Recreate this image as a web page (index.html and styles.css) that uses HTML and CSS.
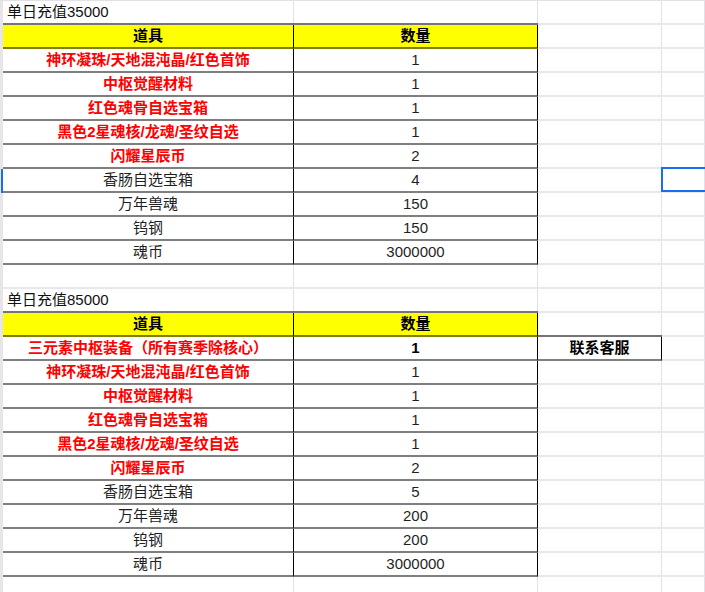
FILE: index.html
```html
<!DOCTYPE html>
<html lang="zh-CN">
<head>
<meta charset="utf-8">
<title>单日充值</title>
<link rel="stylesheet" href="styles.css">
</head>
<body>
<div class="sheet">
  <div class="row"><div class="strip"></div><div class="cell title">单日充值35000</div><div class="cell"></div><div class="cell"></div><div class="cell"></div></div>
  <div class="row"><div class="strip"></div><div class="cell t hd">道具</div><div class="cell t hd">数量</div><div class="cell"></div><div class="cell"></div></div>
  <div class="row"><div class="strip"></div><div class="cell t red">神环凝珠/天地混沌晶/红色首饰</div><div class="cell t">1</div><div class="cell"></div><div class="cell"></div></div>
  <div class="row"><div class="strip"></div><div class="cell t red">中枢觉醒材料</div><div class="cell t">1</div><div class="cell"></div><div class="cell"></div></div>
  <div class="row"><div class="strip"></div><div class="cell t red">红色魂骨自选宝箱</div><div class="cell t">1</div><div class="cell"></div><div class="cell"></div></div>
  <div class="row"><div class="strip"></div><div class="cell t red">黑色2星魂核/龙魂/圣纹自选</div><div class="cell t">1</div><div class="cell"></div><div class="cell"></div></div>
  <div class="row"><div class="strip"></div><div class="cell t red">闪耀星辰币</div><div class="cell t">2</div><div class="cell"></div><div class="cell"></div></div>
  <div class="row"><div class="strip active"></div><div class="cell t">香肠自选宝箱</div><div class="cell t">4</div><div class="cell"></div><div class="cell sel"></div></div>
  <div class="row"><div class="strip"></div><div class="cell t">万年兽魂</div><div class="cell t">150</div><div class="cell"></div><div class="cell"></div></div>
  <div class="row"><div class="strip"></div><div class="cell t">钨钢</div><div class="cell t">150</div><div class="cell"></div><div class="cell"></div></div>
  <div class="row"><div class="strip"></div><div class="cell t">魂币</div><div class="cell t">3000000</div><div class="cell"></div><div class="cell"></div></div>
  <div class="row"><div class="strip"></div><div class="cell"></div><div class="cell"></div><div class="cell"></div><div class="cell"></div></div>
  <div class="row"><div class="strip"></div><div class="cell title">单日充值85000</div><div class="cell"></div><div class="cell"></div><div class="cell"></div></div>
  <div class="row"><div class="strip"></div><div class="cell t hd">道具</div><div class="cell t hd">数量</div><div class="cell"></div><div class="cell"></div></div>
  <div class="row"><div class="strip"></div><div class="cell t red">三元素中枢装备（所有赛季除核心）</div><div class="cell t strong">1</div><div class="cell t strong boxed">联系客服</div><div class="cell"></div></div>
  <div class="row"><div class="strip"></div><div class="cell t red">神环凝珠/天地混沌晶/红色首饰</div><div class="cell t">1</div><div class="cell"></div><div class="cell"></div></div>
  <div class="row"><div class="strip"></div><div class="cell t red">中枢觉醒材料</div><div class="cell t">1</div><div class="cell"></div><div class="cell"></div></div>
  <div class="row"><div class="strip"></div><div class="cell t red">红色魂骨自选宝箱</div><div class="cell t">1</div><div class="cell"></div><div class="cell"></div></div>
  <div class="row"><div class="strip"></div><div class="cell t red">黑色2星魂核/龙魂/圣纹自选</div><div class="cell t">1</div><div class="cell"></div><div class="cell"></div></div>
  <div class="row"><div class="strip"></div><div class="cell t red">闪耀星辰币</div><div class="cell t">2</div><div class="cell"></div><div class="cell"></div></div>
  <div class="row"><div class="strip"></div><div class="cell t">香肠自选宝箱</div><div class="cell t">5</div><div class="cell"></div><div class="cell"></div></div>
  <div class="row"><div class="strip"></div><div class="cell t">万年兽魂</div><div class="cell t">200</div><div class="cell"></div><div class="cell"></div></div>
  <div class="row"><div class="strip"></div><div class="cell t">钨钢</div><div class="cell t">200</div><div class="cell"></div><div class="cell"></div></div>
  <div class="row"><div class="strip"></div><div class="cell t">魂币</div><div class="cell t">3000000</div><div class="cell"></div><div class="cell"></div></div>
  <div class="row"><div class="strip"></div><div class="cell"></div><div class="cell"></div><div class="cell"></div><div class="cell"></div></div>
</div>
</body>
</html>
```

FILE: styles.css
```css
html, body {
  margin: 0;
  padding: 0;
  background: #ffffff;
}

body {
  font-family: "Liberation Sans", "Noto Sans CJK SC", sans-serif;
  font-size: 15px;
  color: #1f1f1f;
  overflow: hidden;
}

.sheet {
  display: grid;
  grid-template-columns: 3px 291px 244px 124px 1fr;
  grid-auto-rows: 24px;
  border-top: 1px solid #e2e2e6;
}

.row {
  display: contents;
}

.strip {
  background: #e6e6ea;
}

.strip.active {
  box-shadow: inset -2px 0 0 #1a6cf0;
}

.cell {
  box-sizing: border-box;
  border-right: 1px solid #e2e2e6;
  border-bottom: 2px solid #e8e8ec;
  line-height: 22px;
  text-align: center;
  white-space: nowrap;
  background: #ffffff;
}

.title {
  text-align: left;
  padding-left: 4px;
  color: #111111;
}

.t {
  border-right-color: #000000;
  border-bottom-color: rgba(0, 0, 0, 0.5);
}

.hd {
  background: #ffff00;
  font-weight: bold;
  color: #000000;
  box-shadow: 0 -2px 0 rgba(0, 0, 0, 0.5);
}

.red {
  color: #ff0000;
  font-weight: bold;
}

.strong {
  font-weight: bold;
  color: #000000;
}

.boxed {
  box-shadow: 0 -2px 0 rgba(0, 0, 0, 0.5);
}

.sel {
  position: relative;
}

.sel::after {
  content: "";
  position: absolute;
  top: -2px;
  left: -1px;
  right: -4px;
  height: 25px;
  box-sizing: border-box;
  border: 2px solid #1a6cf0;
}
```
